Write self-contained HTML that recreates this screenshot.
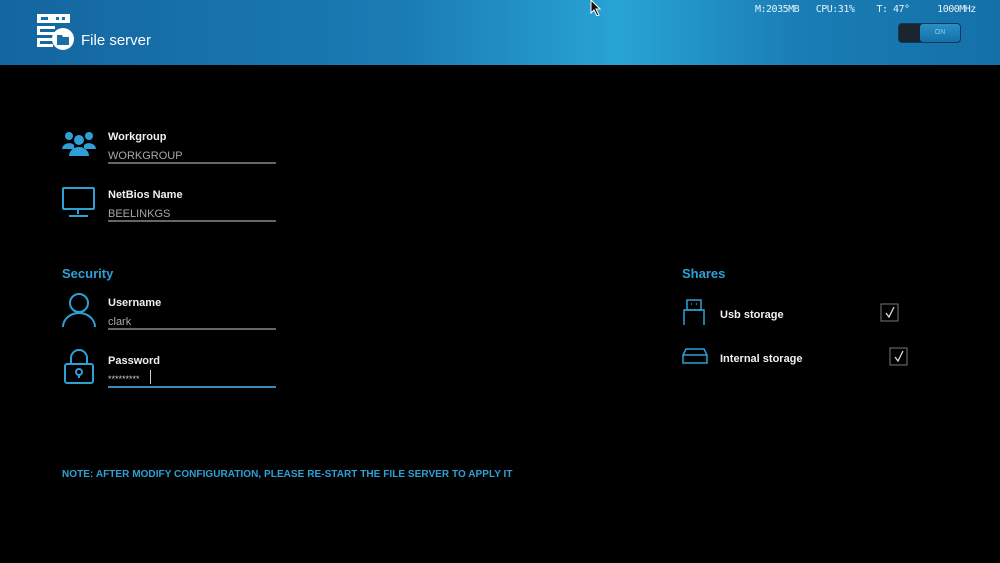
<!DOCTYPE html>
<html><head><meta charset="utf-8"><style>
*{margin:0;padding:0;box-sizing:border-box}
body{width:1000px;height:563px;background:#000;font-family:"Liberation Sans",sans-serif;position:relative;overflow:hidden}
.hdr{position:absolute;left:0;top:0;width:1000px;height:65px;background:linear-gradient(90deg,#1466a0 0%,#1a7bb3 40%,#28a4d4 62%,#1a7db5 80%,#1570a8 100%)}
.t{position:absolute;white-space:nowrap}
.lbl{font-size:11px;font-weight:bold;color:#f0f0f0}
.val{font-size:11px;color:#a8a8a8}
.line{position:absolute;height:2px;background:#666;width:168px;left:108px}
.blue{color:#2ea0d6;font-weight:bold}
svg{position:absolute}
</style></head><body>
<div class="hdr"></div>
<svg style="left:36px;top:13px" width="40" height="38" viewBox="0 0 40 38">
<rect x="1" y="1" width="33" height="9" fill="#fff"/><rect x="5" y="4" width="7" height="3" fill="#1a6fa8"/><rect x="20" y="4" width="3" height="3" fill="#1a6fa8"/><rect x="26" y="4" width="3" height="3" fill="#1a6fa8"/>
<path d="M1 13h18v3H4v3h15v3H1z M1 25h16v3H4v3h13v3H1z" fill="#fff"/>
<circle cx="27" cy="26" r="11" fill="#fff"/><path d="M21 22h5l1 2h6v8H21z" fill="#1a6fa8"/>
</svg>
<div class="t" style="left:81px;top:32px;font-size:15px;color:#fff">File server</div>
<div class="t" style="left:755px;top:4px;font-size:10px;color:#e8f2f8;font-family:'DejaVu Sans Mono',monospace;letter-spacing:-0.5px">M:2035MB&nbsp;&nbsp;&nbsp;CPU:31%&nbsp;&nbsp;&nbsp;&nbsp;T: 47°&nbsp;&nbsp;&nbsp;&nbsp;&nbsp;1000MHz</div>
<div style="position:absolute;left:898px;top:23px;width:63px;height:20px;border-radius:4px;background:#1a2530;border:1px solid #0c3a58"></div>
<div style="position:absolute;left:920px;top:24px;width:40px;height:18px;border-radius:3px;background:linear-gradient(#2a8fc8,#1570a8);color:#8cc8ea;font-size:7px;text-align:center;line-height:18px">ON</div>
<svg style="left:62px;top:130px" width="34" height="28" viewBox="0 0 34 28" fill="#2ea0d6">
<circle cx="7" cy="6" r="4"/><circle cx="27" cy="6" r="4"/><circle cx="17" cy="10" r="5"/>
<path d="M0 19a7 6 0 0 1 12-4v4z M34 19a7 6 0 0 0-12-4v4z M7 26a10 9 0 0 1 20 0z"/></svg>
<div class="t lbl" style="left:108px;top:131px">Workgroup</div>
<div class="t val" style="left:108px;top:150px">WORKGROUP</div><div class="line" style="top:162px"></div>
<svg style="left:61px;top:186px" width="36" height="32" viewBox="0 0 36 32" fill="none" stroke="#2ea0d6" stroke-width="2">
<rect x="2" y="2" width="31" height="21" rx="1"/><path d="M17 24v4M8 30h19"/></svg>
<div class="t lbl" style="left:108px;top:189px">NetBios Name</div>
<div class="t val" style="left:108px;top:208px">BEELINKGS</div><div class="line" style="top:220px"></div>
<div class="t blue" style="left:62px;top:266px;font-size:13px">Security</div>
<svg style="left:61px;top:292px" width="36" height="36" viewBox="0 0 36 36" fill="none" stroke="#2ea0d6" stroke-width="2">
<circle cx="18" cy="11" r="9"/><path d="M2 35a16 14 0 0 1 32 0"/></svg>
<div class="t lbl" style="left:108px;top:297px">Username</div>
<div class="t val" style="left:108px;top:316px">clark</div><div class="line" style="top:328px"></div>
<svg style="left:63px;top:349px" width="32" height="36" viewBox="0 0 32 36" fill="none" stroke="#2ea0d6" stroke-width="2">
<path d="M8 15V9a8 8 0 0 1 16 0v6"/><rect x="2" y="15" width="28" height="19" rx="2"/><circle cx="16" cy="23" r="3"/><path d="M16 26v3"/></svg>
<div class="t lbl" style="left:108px;top:355px">Password</div>
<div class="t val" style="left:108px;top:374px;font-size:9px;color:#ccc">*********</div>
<div style="position:absolute;left:150px;top:370px;width:1px;height:14px;background:#ccc"></div>
<div class="line" style="top:386px;background:#3a8ab8"></div>
<div class="t blue" style="left:682px;top:266px;font-size:13px">Shares</div>
<svg style="left:682px;top:299px" width="24" height="28" viewBox="0 0 24 28" fill="none" stroke="#2ea0d6" stroke-width="1.5">
<rect x="5" y="1" width="14" height="10"/><path d="M2 26V11h20v15"/><path d="M9 5h1M14 5h1"/></svg>
<div class="t lbl" style="left:720px;top:309px">Usb storage</div>
<svg style="left:880px;top:303px" width="20" height="20"><rect x="1" y="1" width="17" height="17" fill="none" stroke="#777"/><path d="M6 10l3 4 5-10" fill="none" stroke="#ddd" stroke-width="1.3"/></svg>
<svg style="left:682px;top:347px" width="26" height="18" viewBox="0 0 26 18" fill="none" stroke="#2ea0d6" stroke-width="1.5">
<path d="M4 2h18l3 6v8H1V8z M1 8h24"/></svg>
<div class="t lbl" style="left:720px;top:353px">Internal storage</div>
<svg style="left:889px;top:347px" width="20" height="20"><rect x="1" y="1" width="17" height="17" fill="none" stroke="#777"/><path d="M6 10l3 4 5-10" fill="none" stroke="#ddd" stroke-width="1.3"/></svg>
<div class="t blue" style="left:62px;top:469px;font-size:10px;letter-spacing:0.05px">NOTE: AFTER MODIFY CONFIGURATION, PLEASE RE-START THE FILE SERVER TO APPLY IT</div>
<svg style="left:590px;top:0" width="12" height="16" viewBox="0 0 12 16"><path d="M1 0v13l3-3 3 6 2-1-3-6h4z" fill="#111" stroke="#fff" stroke-width="1"/></svg>
</body></html>
